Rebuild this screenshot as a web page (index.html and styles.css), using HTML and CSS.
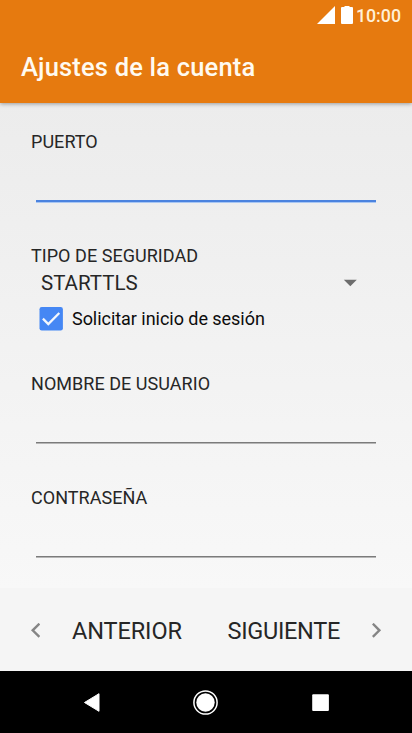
FILE: index.html
```html
<!DOCTYPE html>
<html lang="es">
<head>
<meta charset="utf-8">
<title>Ajustes de la cuenta</title>
<link rel="stylesheet" href="styles.css">
</head>
<body>
<div class="screen">
  <header class="appbar">
    <div class="status">
      <svg class="signal" width="18" height="18" viewBox="0 0 18 18"><path d="M0 18 18 0V18Z"/></svg>
      <svg class="battery" width="12" height="18" viewBox="0 0 12 18"><path d="M3.5 0h5v1H11q1 0 1 1V17q0 1-1 1H1q-1 0-1-1V2q0-1 1-1H3.500Z"/></svg>
      <span class="clock">10:00</span>
    </div>
    <h1 class="title">Ajustes de la cuenta</h1>
  </header>
  <main class="form">
    <section class="field port">
      <div class="label"><span>PUERTO</span></div>
      <div class="input focused"></div>
    </section>
    <section class="security">
      <div class="label"><span>TIPO DE SEGURIDAD</span></div>
      <div class="select"><span>STARTTLS</span>
        <svg width="14" height="8" viewBox="0 0 14 8"><path d="M.8.700H13.800L7.300 7.200Z"/></svg>
      </div>
      <div class="check">
        <svg width="24" height="24" viewBox="0 0 24 24"><rect x=".5" y="0" width="23.400" height="23.400" rx="2.200" fill="#4587f4"/><path d="M3.900 11.600 9.300 17 20.300 6" fill="none" stroke="#f4f7fc" stroke-width="2.300"/></svg>
        <span>Solicitar inicio de sesión</span>
      </div>
    </section>
    <section class="field">
      <div class="label low"><span>NOMBRE DE USUARIO</span></div>
      <div class="input"></div>
    </section>
    <section class="field">
      <div class="label low"><span>CONTRASEÑA</span></div>
      <div class="input"></div>
    </section>
  </main>
  <footer class="steps">
    <div class="step">
      <svg width="10" height="16" viewBox="0 0 10 16"><path d="M9.400.700 2.700 7.300 9.400 13.900"/></svg>
      <span class="prev">ANTERIOR</span>
    </div>
    <div class="step">
      <span class="next">SIGUIENTE</span>
      <svg width="10" height="16" viewBox="0 0 10 16"><path d="M.8.700 7.400 7.300 .8 13.900"/></svg>
    </div>
  </footer>
  <nav class="navbar">
    <svg width="412" height="62" viewBox="0 0 412 62"><path d="M84.500 31.500 99 22.700V40.300Z" stroke="#fff" stroke-width="1" stroke-linejoin="round"/><circle cx="205.500" cy="31.500" r="11.600" fill="none" stroke="#fff" stroke-width="1.500"/><circle cx="205.500" cy="31.500" r="9.200"/><rect x="312.200" y="23.200" width="16.700" height="16.700" rx="1"/></svg>
  </nav>
</div>
</body>
</html>
```
FILE: styles.css
```css
* { box-sizing: border-box; }
body { margin: 0; font-family: Roboto, sans-serif; color: #262626; }
svg { display: block; flex: none; }
span { white-space: nowrap; }
.screen { width: 412px; height: 733px; display: flex; flex-direction: column; overflow: hidden; background: linear-gradient(#ececec 100px, #f8f8f8 590px); }
.appbar { height: 103px; flex: none; background: #e67a0f; color: #fffaf0; box-shadow: 0 1px 4px rgba(0,0,0,.35); }
.status { height: 31px; display: flex; align-items: center; justify-content: flex-end; padding: 0 11px 1px 0; fill: #fff; }
.battery { margin-left: 6px; margin-right: 3px; }
.clock { font-size: 17.800px; font-weight: 500; line-height: 28px; padding-top: 2px; color: #fff0d8; }
.title { margin: 0; padding-left: 21px; font-size: 25.500px; font-weight: 500; letter-spacing: .18px; line-height: 73px; white-space: nowrap; }
.form { flex: 1; min-height: 0; padding: 27px 36px 0 31px; }
.field { height: 114px; }
.label { height: 24px; line-height: 24px; font-size: 18px; letter-spacing: .04px; }
.label.low { line-height: 26px; }
.input { margin: 47px 0 0 5px; height: 2px; border-top: 1px solid #7b7b7b; border-bottom: 1px solid #b6b6b6; }
.input.focused { margin-top: 46px; height: 3px; border-top: 2px solid #4b83df; border-bottom: 1px solid #a9c7f3; }
.security { height: 127px; }
.select { display: flex; justify-content: space-between; align-items: center; height: 30px; padding: 0 19px 0 10px; font-size: 20.500px; line-height: 30px; fill: #6d6d6d; }
.check { display: flex; align-items: center; gap: 9px; margin: 8px 0 0 8px; height: 25px; font-size: 18px; letter-spacing: -.04px; color: #0c0c0c; }
.steps { height: 83px; flex: none; display: flex; align-items: center; justify-content: space-between; padding: 2px 30px 0; background: #f5f5f5; font-size: 23.500px; }
.step { display: flex; align-items: center; gap: 32px; }
.step svg { fill: none; stroke: #858585; stroke-width: 2.400; }
.prev { letter-spacing: -.1px; }
.next { letter-spacing: -.3px; }
.navbar { height: 62px; flex: none; background: #000; fill: #fff; }
```
